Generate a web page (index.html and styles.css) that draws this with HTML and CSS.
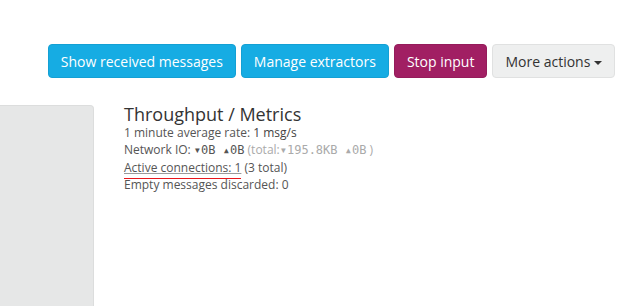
FILE: index.html
```html
<!DOCTYPE html>
<html lang="en">

<head>
  <meta charset="UTF-8">
  <title>Input details</title>
  <link rel="stylesheet" href="styles.css">
</head>

<body>
  <div class="actions">
    <button class="btn btn-info">Show received messages</button>
    <button class="btn btn-info">Manage extractors</button>
    <button class="btn btn-primary">Stop input</button>
    <button class="btn btn-default">More actions <span class="caret"></span></button>
  </div>

  <div class="details">
    <div class="side-panel"></div>
    <div class="metrics">
      <h2>Throughput / Metrics</h2>
      <p>1 minute average rate: <span class="rate">1 msg/s</span></p>
      <p>Network IO:
        <span class="mono">&#9662;0B &#9652;0B</span>
        <span class="total">(total:<span class="mono">&#9662;195.8KB &#9652;0B</span> )</span>
      </p>
      <p><span class="active">Active connections: 1</span> (3 total)</p>
      <p>Empty messages discarded: 0</p>
    </div>
  </div>
</body>

</html>
```

FILE: styles.css
```css
body {
  margin: 0;
  font-family: "Open Sans", sans-serif;
  background: #fff;
  color: #555;
  overflow: hidden;
}

.actions {
  display: flex;
  justify-content: flex-end;
  gap: 5px;
  padding: 44px 6px 0 0;
}

.btn {
  font-family: "Open Sans", sans-serif;
  font-size: 14px;
  height: 34px;
  padding: 0 12px;
  border: 1px solid transparent;
  border-radius: 4px;
  color: #fff;
}

.btn-info {
  background-color: #16ace3;
  border-color: #14a0d4;
}

.btn-primary {
  background-color: #a11f63;
  border-color: #951c5b;
}

.btn-default {
  background-color: #eeefef;
  border-color: #e0e1e1;
  color: #333;
}

.caret {
  display: inline-block;
  width: 0;
  height: 0;
  vertical-align: middle;
  border-top: 4px solid #333;
  border-left: 4px solid transparent;
  border-right: 4px solid transparent;
}

.details {
  display: flex;
  margin-top: 27px;
}

.side-panel {
  width: 93px;
  height: 210px;
  background: #e6e7e7;
  border: 1px solid #dcdddd;
  border-left: none;
  border-top-right-radius: 4px;
  flex-shrink: 0;
}

.metrics {
  padding-left: 30px;
}

.metrics h2 {
  margin: -1px 0 -1px;
  font-size: 18px;
  font-weight: normal;
  color: #333;
  line-height: 21px;
}

.metrics p {
  margin: 0;
  font-size: 12px;
  line-height: 17.3px;
  height: 17.3px;
}

.rate {
  color: #444;
}

.mono {
  font-family: "DejaVu Sans Mono", monospace;
  font-size: 12px;
  line-height: 1;
  white-space: pre;
}

.total {
  color: #aaa;
}

.active {
  text-decoration: underline;
  text-decoration-color: #999;
  border-bottom: 1.5px solid #e8161c;
  padding-bottom: 2px;
}
```
